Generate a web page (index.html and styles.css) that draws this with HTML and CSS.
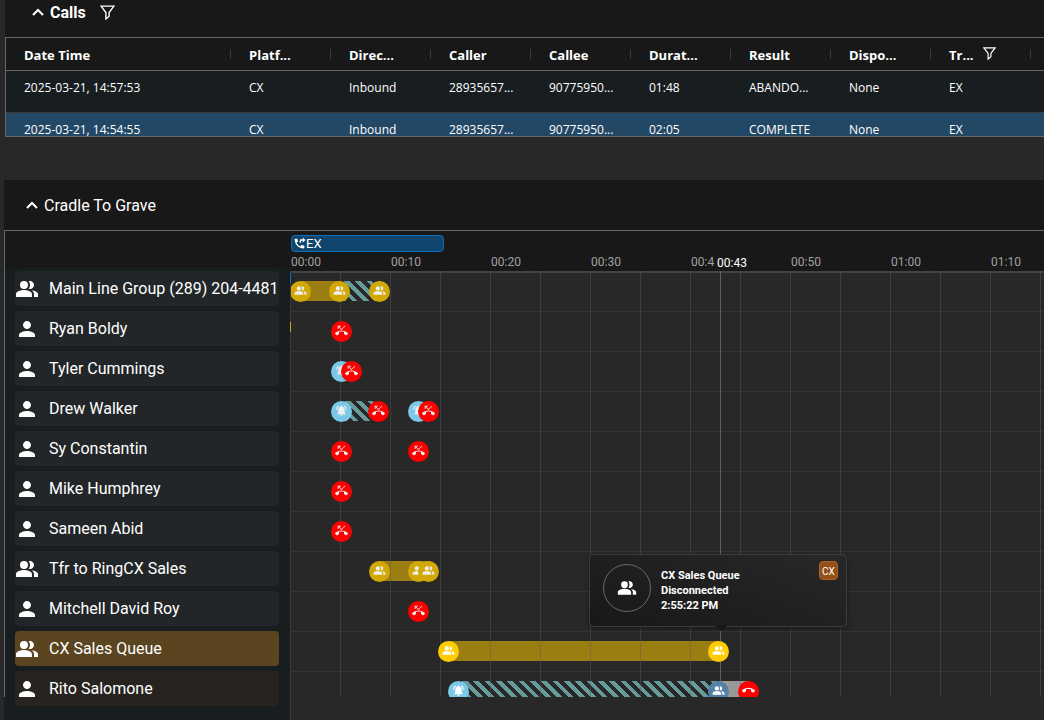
FILE: index.html
```html
<!DOCTYPE html>
<html lang="en">
<head>
<meta charset="utf-8">
<title>Calls</title>
<link rel="stylesheet" href="styles.css">
</head>
<body>
<svg class="sprite" aria-hidden="true">
  <symbol id="group" viewBox="0 0 24 24"><path d="M16.67 13.13C18.04 14.06 19 15.32 19 17v3h4v-3c0-2.18-3.57-3.47-6.33-3.87zM15 12c2.21 0 4-1.79 4-4s-1.79-4-4-4c-.47 0-.91.1-1.33.24C14.5 5.27 15 6.58 15 8s-.5 2.73-1.33 3.76c.42.14.86.24 1.33.24zM9 12a4 4 0 1 0 0-8 4 4 0 0 0 0 8zM9 13c-2.67 0-8 1.34-8 4v3h16v-3c0-2.66-5.33-4-8-4z"/></symbol>
  <symbol id="person" viewBox="0 0 24 24"><path d="M12 12c2.21 0 4-1.79 4-4s-1.79-4-4-4-4 1.79-4 4 1.79 4 4 4zm0 2c-2.67 0-8 1.34-8 4v2h16v-2c0-2.66-5.33-4-8-4z"/></symbol>
  <symbol id="missed" viewBox="0 0 24 24"><path d="M6.5 5.5L12 11l7-7-1-1-6 6-4.5-4.5H11V3H5v6h1.5V5.5zm17.21 11.17C20.66 13.78 16.54 12 12 12 7.46 12 3.34 13.78.29 16.67c-.18.18-.29.43-.29.71s.11.53.29.71l2.48 2.48c.18.18.43.29.71.29.27 0 .52-.11.7-.28.79-.74 1.69-1.36 2.66-1.85.33-.16.56-.5.56-.9v-3.1c1.45-.48 3-.73 4.6-.73s3.15.25 4.6.72v3.1c0 .39.23.74.56.9.98.49 1.87 1.12 2.67 1.85.18.18.43.28.7.28.28 0 .53-.11.71-.29l2.48-2.48c.18-.18.29-.43.29-.71s-.12-.52-.3-.7z"/></symbol>
  <symbol id="hangup" viewBox="0 0 24 24"><path d="M12 9c-1.6 0-3.15.25-4.6.72v3.1c0 .39-.23.74-.56.9-.98.49-1.87 1.12-2.66 1.85-.18.18-.43.28-.7.28-.28 0-.53-.11-.71-.29L.29 13.08c-.18-.17-.29-.42-.29-.7 0-.28.11-.53.29-.71C3.34 8.78 7.46 7 12 7s8.66 1.78 11.71 4.67c.18.18.29.43.29.71 0 .28-.11.53-.29.71l-2.48 2.48c-.18.18-.43.29-.71.29-.27 0-.52-.11-.7-.28-.79-.74-1.69-1.36-2.67-1.85-.33-.16-.56-.5-.56-.9v-3.1C15.15 9.25 13.6 9 12 9z"/></symbol>
  <symbol id="bell" viewBox="0 0 24 24"><path d="M7.58 4.08L6.15 2.65C3.75 4.48 2.17 7.3 2.03 10.5h2c.15-2.65 1.51-4.97 3.55-6.42zm12.39 6.42h2c-.15-3.2-1.73-6.02-4.12-7.85l-1.42 1.43c2.02 1.45 3.39 3.77 3.54 6.42zM18 11c0-3.07-1.64-5.64-4.5-6.32V4c0-.83-.67-1.5-1.5-1.5s-1.5.67-1.5 1.5v.68C7.63 5.36 6 7.92 6 11v5l-2 2v1h16v-1l-2-2v-5zm-6 11c.14 0 .27-.01.4-.04.65-.14 1.18-.58 1.44-1.18.1-.24.15-.5.15-.78h-4c.01 1.1.9 2 2.01 2z"/></symbol>
  <symbol id="transfer" viewBox="0 0 24 24"><path d="M20 15.5c-1.25 0-2.45-.2-3.57-.57-.35-.11-.74-.03-1.02.24l-2.2 2.2c-2.83-1.44-5.15-3.75-6.59-6.59l2.2-2.2c.28-.28.36-.67.25-1.02C8.7 6.45 8.5 5.25 8.5 4c0-.55-.45-1-1-1H4c-.55 0-1 .45-1 1 0 9.39 7.61 17 17 17 .55 0 1-.45 1-1v-3.5c0-.55-.45-1-1-1zM18 1l5 4.500-5 4.500V7h-5V4h5zM11 8.500l4-3v6z"/></symbol>
  <symbol id="chevron" viewBox="0 0 12 8"><path d="M1 7l5-5 5 5" fill="none" stroke="currentColor" stroke-width="2"/></symbol>
  <symbol id="funnel" viewBox="0 0 14 14"><path d="M1 1h12L8.500 7v3.500L5.500 13V7z" fill="none" stroke="currentColor" stroke-width="1.300"/></symbol>
</svg>

<section class="calls">
  <header class="calls-head">
    <button class="toggle strong" type="button"><svg class="chevron"><use href="#chevron"/></svg>Calls</button>
    <button class="icon-button" type="button" aria-label="Filter calls"><svg class="funnel"><use href="#funnel"/></svg></button>
  </header>
  <div class="calls-grid">
    <table>
      <thead>
        <tr><th class="wide">Date Time</th><th>Platf...</th><th>Direc...</th><th>Caller</th><th>Callee</th><th>Durat...</th><th>Result</th><th>Dispo...</th><th>Tr...<button class="icon-button in-cell" type="button" aria-label="Filter column"><svg class="funnel small"><use href="#funnel"/></svg></button></th><th class="rest"></th></tr>
      </thead>
      <tbody>
        <tr><td>2025-03-21, 14:57:53</td><td>CX</td><td>Inbound</td><td>28935657...</td><td>90775950...</td><td>01:48</td><td>ABANDO...</td><td>None</td><td>EX</td><td></td></tr>
        <tr class="selected"><td>2025-03-21, 14:54:55</td><td>CX</td><td>Inbound</td><td>28935657...</td><td>90775950...</td><td>02:05</td><td>COMPLETE</td><td>None</td><td>EX</td><td></td></tr>
      </tbody>
    </table>
  </div>
</section>

<section class="cradle">
  <header class="cradle-head">
    <button class="toggle" type="button"><svg class="chevron"><use href="#chevron"/></svg>Cradle To Grave</button>
  </header>
  <div class="timeline">
    <div class="people">
      <ul>
        <li><svg><use href="#group"/></svg>Main Line Group (289) 204-4481</li>
        <li><svg><use href="#person"/></svg>Ryan Boldy</li>
        <li><svg><use href="#person"/></svg>Tyler Cummings</li>
        <li><svg><use href="#person"/></svg>Drew Walker</li>
        <li><svg><use href="#person"/></svg>Sy Constantin</li>
        <li><svg><use href="#person"/></svg>Mike Humphrey</li>
        <li><svg><use href="#person"/></svg>Sameen Abid</li>
        <li><svg><use href="#group"/></svg>Tfr to RingCX Sales</li>
        <li><svg><use href="#person"/></svg>Mitchell David Roy</li>
        <li class="active"><svg><use href="#group"/></svg>CX Sales Queue</li>
        <li class="related"><svg><use href="#person"/></svg>Rito Salomone</li>
      </ul>
    </div>
    <div class="chart">
      <div class="scale">
        <div class="segment" style="width:153px"><svg><use href="#transfer"/></svg>EX</div>
        <div class="ticks"><span>00:00</span><span>00:10</span><span>00:20</span><span>00:30</span><span class="covered">00:4</span><span>00:50</span><span>01:00</span><span>01:10</span></div>
        <span class="now-label" style="left:426px">00:43</span>
      </div>
      <div class="lanes">
        <div class="lane dim">
          <i class="bar gold" style="left:10px;width:40px"></i><i class="bar striped" style="left:50px;width:40px"></i>
          <b class="dot gold" style="left:0px"><svg><use href="#group"/></svg></b><b class="dot gold" style="left:39px"><svg><use href="#group"/></svg></b><b class="dot gold" style="left:79px"><svg><use href="#group"/></svg></b>
        </div>
        <div class="lane"><b class="dot red" style="left:41px"><svg><use href="#missed"/></svg></b></div>
        <div class="lane"><b class="dot blue" style="left:41px"><svg><use href="#bell"/></svg></b><b class="dot red" style="left:51px"><svg><use href="#missed"/></svg></b></div>
        <div class="lane"><i class="bar striped" style="left:51px;width:37px"></i><b class="dot blue" style="left:41px"><svg><use href="#bell"/></svg></b><b class="dot red" style="left:78px"><svg><use href="#missed"/></svg></b><b class="dot blue" style="left:118px"><svg><use href="#bell"/></svg></b><b class="dot red" style="left:128px"><svg><use href="#missed"/></svg></b></div>
        <div class="lane"><b class="dot red" style="left:41px"><svg><use href="#missed"/></svg></b><b class="dot red" style="left:118px"><svg><use href="#missed"/></svg></b></div>
        <div class="lane"><b class="dot red" style="left:41px"><svg><use href="#missed"/></svg></b></div>
        <div class="lane"><b class="dot red" style="left:41px"><svg><use href="#missed"/></svg></b></div>
        <div class="lane dim"><i class="bar gold" style="left:89px;width:50px"></i><b class="dot gold" style="left:79px"><svg><use href="#group"/></svg></b><b class="dot gold" style="left:118px"><svg><use href="#group"/></svg></b><b class="dot gold" style="left:128px"><svg><use href="#group"/></svg></b></div>
        <div class="lane"><b class="dot red" style="left:118px"><svg><use href="#missed"/></svg></b></div>
        <div class="lane bright"><i class="bar gold" style="left:158px;width:270px"></i><b class="dot gold" style="left:148px"><svg><use href="#group"/></svg></b><b class="dot gold" style="left:418px"><svg><use href="#group"/></svg></b></div>
        <div class="lane bright"><i class="bar striped" style="left:168px;width:260px"></i><i class="bar gray" style="left:428px;width:30px"></i><b class="dot blue" style="left:158px"><svg><use href="#bell"/></svg></b><b class="dot steel" style="left:418px"><svg><use href="#group"/></svg></b><b class="dot red" style="left:448px"><svg><use href="#hangup"/></svg></b></div>
        <div class="cursor" style="left:429px"></div>
      </div>
      <i class="edge edge-blue"></i>
      <i class="edge edge-gold"></i>
      <div class="tooltip" style="left:298px">
        <span class="avatar"><svg><use href="#group"/></svg></span>
        <p>CX Sales Queue<br>Disconnected<br>2:55:22 PM</p>
        <span class="badge">CX</span>
      </div>
    </div>
  </div>
</section>
</body>
</html>
```
FILE: styles.css
```css
* { box-sizing: border-box; }

body {
  margin: 0;
  height: 100vh;
  overflow: hidden;
  display: flex;
  flex-direction: column;
  background: #282828;
  color: #fff;
  font-family: Roboto, "Liberation Sans", sans-serif;
  font-size: 16px;
}

svg { display: block; flex: none; fill: currentColor; }
.sprite { position: absolute; width: 0; height: 0; }

button {
  border: 0;
  padding: 0;
  background: none;
  color: inherit;
  font: inherit;
}

.toggle { display: flex; align-items: center; gap: 6px; }
.toggle.strong { font-weight: 700; }
.icon-button { display: flex; }
.chevron { width: 12px; height: 8px; }
.funnel { width: 15px; height: 15px; }
.funnel.small { width: 13px; height: 13px; }

.calls { margin-left: 5px; background: #181818; }
.calls-head {
  display: flex;
  align-items: center;
  gap: 14px;
  height: 37px;
  padding: 0 27px 13px;
}
.calls-grid {
  height: 100px;
  overflow: hidden;
  border: 1px solid #66686a;
  border-right: 0;
}

table {
  width: 100%;
  table-layout: fixed;
  border-collapse: separate;
  border-spacing: 0;
  font-family: "Open Sans", "Noto Sans", sans-serif;
  font-size: 12px;
}
th, td { padding: 0 0 0 18px; text-align: left; white-space: nowrap; }
th {
  position: relative;
  width: 100px;
  height: 33px;
  padding-top: 2px;
  border-bottom: 1px solid #66686a;
  font-size: 13px;
  font-weight: 700;
}
th.wide { width: 225px; }
th.rest { width: auto; }
th:not(.rest)::after {
  content: "";
  position: absolute;
  right: 0;
  top: 11px;
  width: 1px;
  height: 10px;
  background: #3c3c3c;
}
.in-cell { display: inline-block; margin-left: 9px; }
thead { background: #181818; }
td { height: 42px; padding-bottom: 8px; background: #181d1f; border-bottom: 1px solid #3a3a3a; }
.selected td { background: #234866; }

.cradle {
  flex: 1;
  display: flex;
  flex-direction: column;
  margin: 43px 0 0 4px;
}
.cradle-head {
  display: flex;
  align-items: center;
  height: 50px;
  padding-left: 22px;
  background: #181818;
}

.timeline {
  flex: 1;
  display: flex;
  border-top: 1px solid #66686a;
}
.people {
  width: 287px;
  background: linear-gradient(#181818 37px, #181d1f 37px);
  border-right: 1px solid #3c3c3c;
  position: relative;
}
.people::before {
  content: "";
  position: absolute;
  left: 0;
  top: 0;
  width: 1px;
  height: 466px;
  background: #66686a;
}
.people::after {
  content: "";
  position: absolute;
  right: -1px;
  top: 0;
  width: 1px;
  height: 40px;
  background: #181818;
}
ul {
  display: flex;
  flex-direction: column;
  gap: 5px;
  margin: 0;
  padding: 40px 11px 0;
  list-style: none;
}
li {
  display: flex;
  align-items: center;
  gap: 10px;
  height: 35px;
  border-radius: 4px;
  background: #222628;
  white-space: nowrap;
}
li svg { width: 24px; height: 24px; }
li.active { background: #5b4520; }
li.related { background: #272420; }

.chart { flex: 1; min-width: 0; position: relative; }
.scale {
  position: relative;
  height: 40px;
  padding-top: 4px;
  background: #181818;
  overflow: hidden;
}
.segment {
  display: flex;
  align-items: center;
  height: 17px;
  padding-left: 1px;
  border: 1px solid #0c6ebd;
  border-radius: 4px;
  background: #10456d;
  font-size: 13px;
}
.segment svg { width: 13px; height: 13px; }
.ticks {
  display: flex;
  padding-top: 3px;
  color: #a0a0a0;
  font-size: 12px;
  line-height: 14px;
}
.ticks span { flex: 0 0 100px; }
.ticks .covered { flex-basis: 24px; margin-right: 76px; }
.now-label {
  position: absolute;
  top: 25px;
  font-size: 12px;
  line-height: 14px;
}

.lanes {
  position: relative;
  height: 426px;
  overflow: hidden;
}
.lanes::before {
  content: "";
  position: absolute;
  inset: 0 3px 0 0;
  z-index: 1;
  background: linear-gradient(90deg, transparent 49px, #5a5a5a70 49px);
  background-size: 50px 100%;
}
.lane { position: relative; height: 40px; box-shadow: inset 0 1px #343434; }
.lane:first-child { box-shadow: inset 0 2px #444; }
.bar { position: absolute; top: 10px; height: 20px; }
.bar.gold { background: #9b7e12; }
.bar.gray { background: #999; }
.bar.striped { background: repeating-linear-gradient(45deg, #679b9b 0 4px, #282828 4px 8px); }
.dot {
  position: absolute;
  top: 10px;
  z-index: 2;
  display: grid;
  justify-content: center;
  padding-top: 3px;
  width: 21px;
  height: 21px;
  margin-left: -1px;
  border-radius: 50%;
  color: #eee;
}
.dot svg { width: 13px; height: 13px; }
.dot.gold { background: #d2a806; }
.bright .dot { color: #fff; }
.bright .dot.gold { background: #fecc02; }
.dot.red { background: #f00; }
.dot.blue { background: #7bc8e8; }
.bright .dot.steel { background: #5681a6; }
.cursor {
  position: absolute;
  top: 0;
  bottom: 0;
  z-index: 1;
  width: 1px;
  background: #606060;
}
.edge { position: absolute; left: -1px; width: 1px; height: 10px; }
.edge-blue { top: 42px; background: #0c6ebd; }
.edge-gold { top: 91px; background: #d2a806; }

.tooltip {
  position: absolute;
  top: 323px;
  z-index: 3;
  display: flex;
  align-items: flex-start;
  gap: 10px;
  width: 258px;
  height: 73px;
  padding: 9px 8px 9px 13px;
  border: 1px solid #3c3c3c;
  border-radius: 4px;
  background: linear-gradient(20deg, #181818, #282828);
  box-shadow: 0 2px 4px #0006;
}
.tooltip::after {
  content: "";
  position: absolute;
  left: 125px;
  top: 71px;
  border: 6px solid transparent;
  border-top: 5px solid #181818;
  border-bottom: 0;
}
.avatar {
  display: grid;
  place-items: center;
  width: 48px;
  height: 48px;
  border: 1px solid #68686c;
  border-radius: 50%;
}
.avatar svg { width: 20px; height: 20px; }
.tooltip p { flex: 1; margin: 4px 0 0; font-size: 11px; font-weight: 700; line-height: 15px; }
.badge {
  width: 19px;
  height: 19px;
  margin-top: -3px;
  border: 1px solid #a9622a;
  border-radius: 4px;
  background: #935018;
  font-size: 10px;
  line-height: 19px;
  text-align: center;
}
```
